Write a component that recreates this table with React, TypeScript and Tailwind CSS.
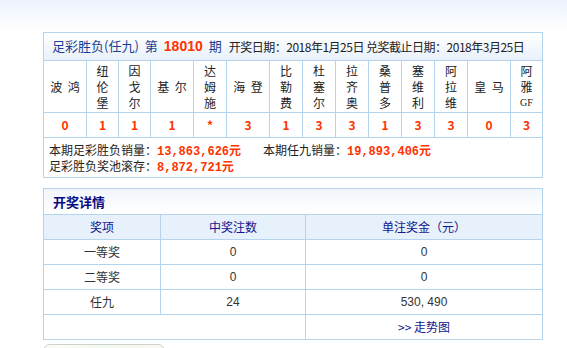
import React from 'react';

const teams: { name: string[]; result: string }[] = [
  { name: ['波 鸿'], result: '0' },
  { name: ['纽', '伦', '堡'], result: '1' },
  { name: ['因', '戈', '尔'], result: '1' },
  { name: ['基 尔'], result: '1' },
  { name: ['达', '姆', '施'], result: '*' },
  { name: ['海 登'], result: '3' },
  { name: ['比', '勒', '费'], result: '1' },
  { name: ['杜', '塞', '尔'], result: '3' },
  { name: ['拉', '齐', '奥'], result: '3' },
  { name: ['桑', '普', '多'], result: '1' },
  { name: ['塞', '维', '利'], result: '3' },
  { name: ['阿', '拉', '维'], result: '3' },
  { name: ['皇 马'], result: '0' },
  { name: ['阿', '雅', 'GF'], result: '3' },
];

const prizes = [
  { level: '一等奖', count: '0', amount: '0' },
  { level: '二等奖', count: '0', amount: '0' },
  { level: '任九', count: '24', amount: '530,490' },
];

const cols =
  'grid grid-cols-[42px_32px_32px_43px_33px_43px_33px_33px_33px_33px_33px_33px_43px_32px]';

export default function App() {
  return (
    <div
      className="min-h-[348px] overflow-hidden bg-[linear-gradient(to_bottom,#edf3fc,#ffffff_32px)] pt-[32px] text-[12px] text-[#333] [font-family:'Noto_Sans_CJK_SC','Liberation_Sans',sans-serif]"
    >
      <div className="ml-[43px] w-[500px] border border-[#b3d4ec] bg-white">
        <div className="flex h-[28px] items-center border-b border-[#b3d4ec] bg-[linear-gradient(to_bottom,#ffffff,#e9f1fb)] pl-[8px] whitespace-nowrap">
          <span className="text-[13px] text-[#1b3f94]">
            足彩胜负(任九)<span className="ml-[6px]">第</span>
            <b className="mx-[6px] text-[14px] text-[#ff3300] [font-family:'Liberation_Sans',sans-serif]">18010</b>期
          </span>
          <span className="ml-[7px] text-[12px] tracking-[-0.5px] text-[#222]">
            开奖日期：2018年1月25日 兑奖截止日期：2018年3月25日
          </span>
        </div>

        <div className={`${cols} h-[52px] border-b border-[#b3d4ec]`}>
          {teams.map((t, i) => (
            <div
              key={i}
              className={`flex flex-col items-center justify-center leading-[16px] text-[#222] ${i > 0 ? 'border-l border-[#b3d4ec]' : ''}`}
            >
              {t.name.map((c, j) => (
                <span
                  key={j}
                  className={c === 'GF' ? 'text-[10px] [font-family:"Liberation_Serif",serif]' : 'whitespace-pre'}
                >
                  {c === 'GF' ? 'GF' : c.replace(' ', '  ')}
                </span>
              ))}
            </div>
          ))}
        </div>

        <div className={`${cols} h-[25px] border-b border-[#b3d4ec]`}>
          {teams.map((t, i) => (
            <div
              key={i}
              className={`flex items-center justify-center font-bold text-[#ff3300] ${i > 0 ? 'border-l border-[#b3d4ec]' : ''}`}
            >
              {t.result}
            </div>
          ))}
        </div>

        <div className="flex h-[39px] flex-col justify-center pt-[2px] pl-[5px] leading-[14px] text-[#222] whitespace-nowrap">
          <div className="flex">
            <span className="w-[214px]">
              本期足彩胜负销量：
              <b className="text-[#ff3300] [font-family:'Liberation_Mono',monospace]">13,863,626</b>
              <b className="text-[#ff3300]">元</b>
            </span>
            <span>
              本期任九销量：
              <b className="text-[#ff3300] [font-family:'Liberation_Mono',monospace]">19,893,406</b>
              <b className="text-[#ff3300]">元</b>
            </span>
          </div>
          <div>
            足彩胜负奖池滚存：
            <b className="text-[#ff3300] [font-family:'Liberation_Mono',monospace]">8,872,721</b>
            <b className="text-[#ff3300]">元</b>
          </div>
        </div>
      </div>

      <div className="mt-[10px] ml-[43px] w-[500px] border border-[#b3d4ec] bg-white">
        <div className="flex h-[26px] items-center border-b border-[#b3d4ec] bg-[linear-gradient(to_bottom,#f2f6fc,#ffffff)] pl-[9px] text-[13px] font-bold text-[#0a0a80]">
          开奖详情
        </div>
        <div className="grid grid-cols-[116px_145px_237px] text-center">
          <div className="flex h-[25px] items-center justify-center border-b border-[#b3d4ec] bg-[#e7f1fc] text-[#14148c]">
            奖项
          </div>
          <div className="flex h-[25px] items-center justify-center border-b border-l border-[#b3d4ec] bg-[#e7f1fc] text-[#14148c]">
            中奖注数
          </div>
          <div className="flex h-[25px] items-center justify-center border-b border-l border-[#b3d4ec] bg-[#e7f1fc] text-[#14148c]">
            单注奖金（元）
          </div>
          {prizes.map(p => (
            <React.Fragment key={p.level}>
              <div className="flex h-[25px] items-center justify-center border-b border-[#b3d4ec]">
                {p.level}
              </div>
              <div className="flex h-[25px] items-center justify-center border-b border-l border-[#b3d4ec] [font-family:'Liberation_Sans',sans-serif]">
                {p.count}
              </div>
              <div className="flex h-[25px] items-center justify-center border-b border-l border-[#b3d4ec] [font-family:'Liberation_Sans',sans-serif]">
                {p.amount.replace(',', ', ')}
              </div>
            </React.Fragment>
          ))}
          <div className="col-span-2 h-[24px]" />
          <div className="flex h-[24px] items-center justify-center border-l border-[#b3d4ec] text-[#14148c]">
            &gt;&gt; 走势图
          </div>
        </div>
      </div>

      <div className="mt-[4px] ml-[43px] h-[20px] w-[122px] rounded-t-[7px] border border-[#cfcfcf] bg-[linear-gradient(to_right,#fbfbf6,#f4fbef,#fbf8f2)]" />
    </div>
  );
}
